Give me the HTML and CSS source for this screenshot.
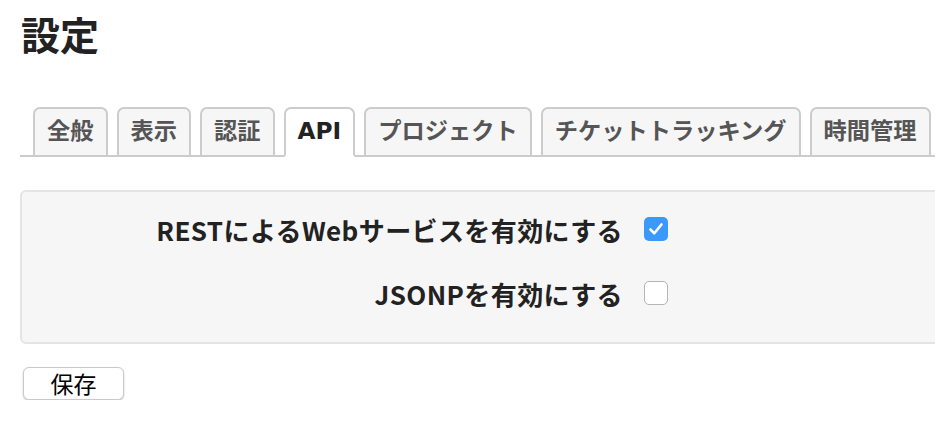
FILE: index.html
```html
<!DOCTYPE html>
<html lang="ja">
<head>
<meta charset="utf-8">
<title>設定</title>
<link rel="stylesheet" href="styles.css">
</head>
<body>
<div class="page">
  <h2 class="title">設定</h2>
  <ul class="tabs">
    <li class="tab">全般</li>
    <li class="tab">表示</li>
    <li class="tab">認証</li>
    <li class="tab active">API</li>
    <li class="tab">プロジェクト</li>
    <li class="tab">チケットトラッキング</li>
    <li class="tab">時間管理</li>
  </ul>
  <div class="box">
    <div class="row">
      <label class="label">RESTによるWebサービスを有効にする</label>
      <span class="cb checked">
        <svg viewBox="0 0 24 24" width="24" height="24"><path d="M6.5 12.5 L10.3 16.3 L17.5 7.5" fill="none" stroke="#fff" stroke-width="2.6" stroke-linecap="round" stroke-linejoin="round"/></svg>
      </span>
    </div>
    <div class="row">
      <label class="label">JSONPを有効にする</label>
      <span class="cb"></span>
    </div>
  </div>
  <button class="save">保存</button>
</div>
</body>
</html>
```
FILE: styles.css
```css
html, body {
  margin: 0;
  padding: 0;
  background: #fff;
  overflow: hidden;
}
.page {
  width: 1000px;
  padding-left: 20px;
  font-family: "Noto Sans CJK JP", "DejaVu Sans", sans-serif;
  color: #222;
}
.title {
  margin: 11px 0 0 1px;
  font-size: 39px;
  line-height: 44px;
  font-weight: bold;
  color: #222;
}
.tabs {
  list-style: none;
  margin: 52px 0 0 0;
  padding: 0 0 0 13px;
  display: flex;
  align-items: flex-end;
  gap: 9px;
  border-bottom: 2px solid #cccccc;
  height: 48px;
}
.tab {
  box-sizing: border-box;
  height: 50px;
  margin-bottom: -2px;
  padding: 0 12px;
  border: 2px solid #cccccc;
  border-radius: 7px 7px 0 0;
  background: #f6f6f6;
  color: #555;
  font-family: "DejaVu Sans", "Noto Sans CJK JP", sans-serif;
  font-weight: bold;
  font-size: 23.25px;
  line-height: 44px;
  white-space: nowrap;
}
.tab.active {
  background: #fff;
  color: #222;
  border-bottom-color: #fff;
}
.box {
  margin-top: 33px;
  box-sizing: border-box;
  height: 154px;
  border: 2px solid #e4e4e4;
  border-radius: 6px;
  background: #f6f6f6;
  padding: 17px 0 0 0;
  display: flex;
  flex-direction: column;
  gap: 24px;
}
.row {
  display: flex;
  align-items: center;
  height: 40px;
  gap: 21px;
}
.label {
  width: 601px;
  text-align: right;
  font-weight: bold;
  font-size: 26px;
  letter-spacing: 0.4px;
  color: #222;
}
.cb {
  box-sizing: border-box;
  width: 24px;
  height: 24px;
  border-radius: 5px;
  border: 1px solid #b5b5b5;
  background: #fff;
  display: flex;
}
.cb.checked {
  border: none;
  background: #3b99fc;
}
.save {
  margin: 23px 0 0 3px;
  width: 101px;
  height: 33px;
  background: #fff;
  border: 1px solid #c9c9c9;
  border-radius: 6px;
  box-shadow: 0 1px 2px rgba(0,0,0,0.22);
  font-family: "Noto Sans CJK JP", sans-serif;
  font-size: 23px;
  line-height: 31px;
  padding: 0;
  color: #000;
}
```
